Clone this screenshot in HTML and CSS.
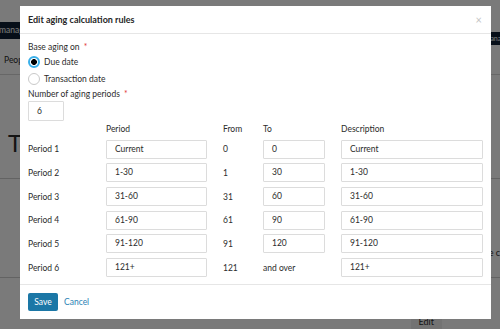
FILE: index.html
```html
<!DOCTYPE html>
<html lang="en">

<head>
    <meta charset="UTF-8">
    <meta name="viewport" content="width=device-width, initial-scale=1.0">
    <title>Edit aging calculation rules</title>
    <link rel="stylesheet" href="styles.css">
</head>

<body>
    <!-- page behind the dialog -->
    <div class="page">
        <div class="topbar">
            <div class="nav-tab">management</div>
            <div class="top-btn">Manage</div>
        </div>
        <div class="tabs"><span>People</span></div>
        <div class="title-block">
            <h1 class="page-title">Terms</h1>
        </div>
        <div class="page-rule"></div>
        <div class="page-row">
            <span class="row-note">the c</span>
        </div>
        <div class="page-rule"></div>
        <div class="page-actions"><span class="edit-btn">Edit</span></div>
    </div>

    <div class="backdrop"></div>

    <div class="modal">
        <div class="modal-header">
            <h2>Edit aging calculation rules</h2>
            <span class="close">&times;</span>
        </div>
        <div class="modal-body">
            <div class="field-label">Base aging on <i>*</i></div>
            <label class="radio"><span class="dot checked"></span>Due date</label>
            <label class="radio"><span class="dot"></span>Transaction date</label>
            <div class="field-label">Number of aging periods <i>*</i></div>
            <div class="input small">6</div>

            <div class="periods">
                <span></span>
                <span class="th">Period</span>
                <span class="th">From</span>
                <span class="th">To</span>
                <span class="th">Description</span>

                <span class="td">Period 1</span>
                <div class="input period">Current</div>
                <span class="td">0</span>
                <div class="input to">0</div>
                <div class="input desc">Current</div>

                <span class="td">Period 2</span>
                <div class="input period">1-30</div>
                <span class="td">1</span>
                <div class="input to">30</div>
                <div class="input desc">1-30</div>

                <span class="td">Period 3</span>
                <div class="input period">31-60</div>
                <span class="td">31</span>
                <div class="input to">60</div>
                <div class="input desc">31-60</div>

                <span class="td">Period 4</span>
                <div class="input period">61-90</div>
                <span class="td">61</span>
                <div class="input to">90</div>
                <div class="input desc">61-90</div>

                <span class="td">Period 5</span>
                <div class="input period">91-120</div>
                <span class="td">91</span>
                <div class="input to">120</div>
                <div class="input desc">91-120</div>

                <span class="td">Period 6</span>
                <div class="input period">121+</div>
                <span class="td">121</span>
                <span class="td">and over</span>
                <div class="input desc">121+</div>
            </div>
        </div>
        <div class="modal-footer">
            <button class="btn-save">Save</button>
            <a class="btn-cancel" href="#">Cancel</a>
        </div>
    </div>
</body>

</html>
```

FILE: styles.css
```css
/* reset start */
* {
    padding: 0;
    margin: 0;
    box-sizing: border-box;
}

html,
body {
    width: 100%;
    height: 100%;
    overflow: hidden;
}

body {
    font-family: Lato, "Noto Sans", sans-serif;
    font-size: 8.5px;
    color: #2b2b2b;
    background: #fff;
}

a {
    text-decoration: none;
}

/* reset end */


/* page behind start */
.page {
    height: 100%;
}

.topbar {
    display: flex;
    justify-content: space-between;
    align-items: flex-start;
    padding-top: 22px;
    height: 48px;
}

.nav-tab {
    background: #0e1f33;
    color: #fff;
    height: 17px;
    line-height: 17px;
    width: 60px;
    text-indent: -1px;
    overflow: hidden;
    white-space: nowrap;
}

.top-btn {
    background: #0e1f33;
    color: #fff;
    margin-top: 10px;
    height: 13px;
    line-height: 13px;
    width: 40px;
    font-size: 7px;
    text-indent: 24px;
    overflow: hidden;
    white-space: nowrap;
}

.tabs {
    height: 27px;
    padding: 7px 0 0 4px;
    border-bottom: 1px solid #d8d8d8;
}

.title-block {
    height: 103px;
    padding: 54px 0 0 8px;
}

.page-title {
    font-weight: 400;
    font-size: 24px;
    line-height: 28px;
}

.page-rule {
    height: 1px;
    background: #d0d0d0;
}

.page-row {
    height: 98px;
    display: flex;
    align-items: flex-end;
    justify-content: flex-end;
    padding-bottom: 18px;
}

.row-note {
    font-size: 9px;
    line-height: 12px;
    width: 9px;
    overflow: hidden;
    white-space: nowrap;
    direction: rtl;
}

.page-actions {
    display: flex;
    justify-content: flex-end;
    padding: 36px 58px 0 0;
}

.edit-btn {
    background: #f0f0f0;
    padding: 2px 8px;
    font-size: 9px;
}

/* page behind end */


/* dialog start */
.backdrop {
    position: fixed;
    inset: 0;
    background: rgba(0, 0, 0, 0.52);
}

.modal {
    position: absolute;
    top: 6px;
    left: 20px;
    width: 471px;
    height: 313px;
    background: #fff;
    display: flex;
    flex-direction: column;
}

.modal-header {
    height: 28px;
    border-bottom: 1px solid #e6e6e6;
    display: flex;
    align-items: center;
    justify-content: space-between;
    padding: 0 8px;
}

.modal-header h2 {
    font-size: 9px;
    font-weight: 700;
    color: #262626;
}

.close {
    color: #c4c4c4;
    font-size: 11px;
    margin-right: 1px;
}

.modal-body {
    flex: 1;
    padding: 7px 8px 0;
}

.field-label {
    line-height: 12px;
}

.field-label i {
    font-style: normal;
    color: #e23a3a;
    margin-left: 2px;
}

.radio {
    display: flex;
    align-items: center;
    height: 17px;
    gap: 4px;
}

.radio + .field-label {
    margin-top: 1px;
}

.dot {
    width: 12px;
    height: 12px;
    border-radius: 50%;
    border: 1px solid #c9c9c9;
    background: #fff;
}

.dot.checked {
    border: 2px solid #3ab0ea;
    background: radial-gradient(circle, #000 0 2.6px, #fff 3.2px);
}

.input {
    border: 1px solid #dcdcdc;
    border-radius: 1px;
    height: 19px;
    line-height: 17px;
    padding-left: 8px;
    background: #fff;
}

.input.small {
    width: 36px;
    height: 20px;
    line-height: 18px;
    margin-top: 1px;
}

.periods {
    display: grid;
    grid-template-columns: 78px 117px 40px 78px 142px;
    grid-template-rows: 12px;
    grid-auto-rows: 19px;
    row-gap: 4.7px;
    margin-top: 2px;
    align-items: center;
}

.th,
.td {
    line-height: 12px;
}

.input.period {
    width: 101px;
}

.input.to {
    width: 62px;
}

.modal-footer {
    height: 35px;
    border-top: 1px solid #e6e6e6;
    display: flex;
    align-items: center;
    gap: 6px;
    padding: 0 8px 1px;
}

.btn-save {
    font-family: inherit;
    font-size: 8.5px;
    color: #fff;
    background: #1b77a6;
    border: none;
    border-radius: 2px;
    width: 30px;
    height: 18px;
}

.btn-cancel {
    color: #2a82b5;
}

/* dialog end */
```
